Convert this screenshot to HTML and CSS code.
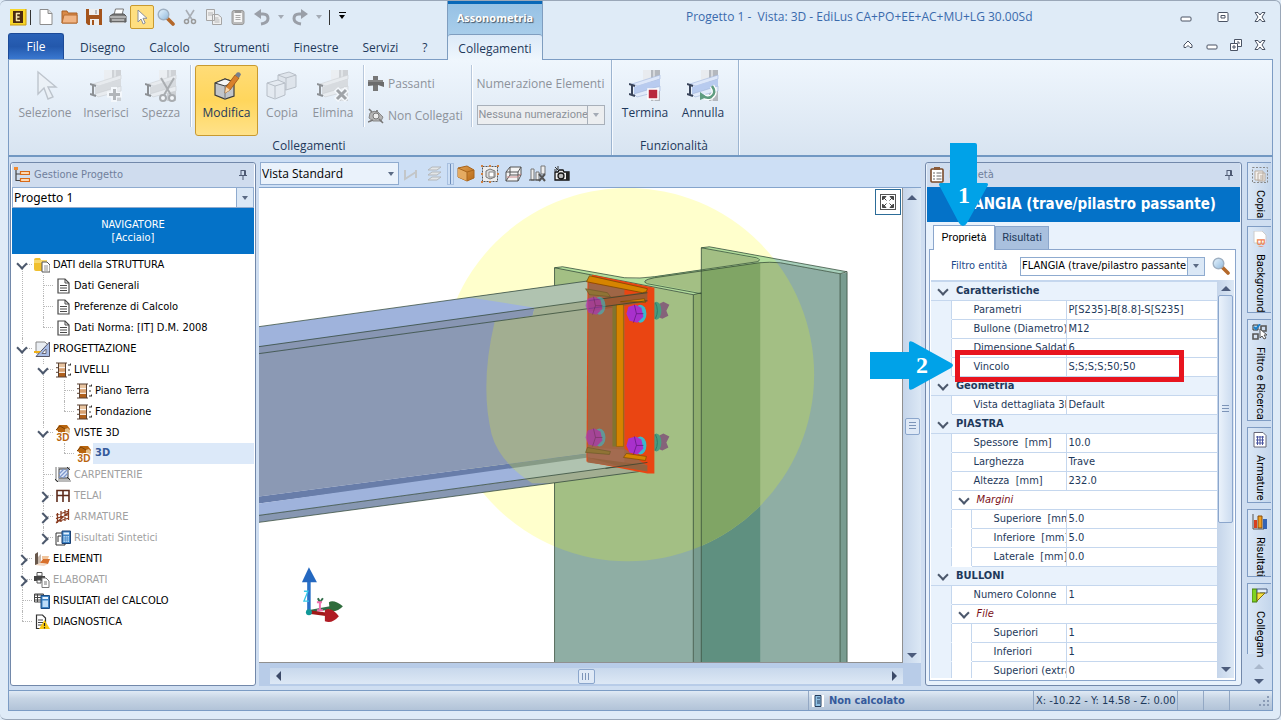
FILE: index.html
```
<!DOCTYPE html>
<html lang="it">
<head>
<meta charset="utf-8">
<title>Progetto 1 - Vista: 3D - EdiLus</title>
<link rel="stylesheet" href="styles.css">
</head>
<body>
<svg class="defs" aria-hidden="true">
  <defs>
    <linearGradient id="glass" x1="0" y1="0" x2="1" y2="1"><stop offset="0" stop-color="#eaf6ff"/><stop offset="1" stop-color="#8fb8dc"/></linearGradient>
    <linearGradient id="wood" x1="0" y1="0" x2="1" y2="1"><stop offset="0" stop-color="#e0a050"/><stop offset="1" stop-color="#b86a18"/></linearGradient>
  </defs>
  <symbol id="i-cursor" viewBox="0 0 16 16"><path d="M4 1v12l3-3 2.200 5 2-1-2.200-4.700h4z" fill="#fff" stroke="#8b8f98"/></symbol>
  <symbol id="i-lens" viewBox="0 0 18 18"><path d="M10 10l6 6" stroke="#b4682a" stroke-width="3.600" stroke-linecap="round"/><circle cx="6.500" cy="6.500" r="5.300" fill="url(#glass)" stroke="#9fb0c2" stroke-width="1.400"/></symbol>
  <symbol id="i-doc" viewBox="0 0 16 16"><path d="M3 1h7l4 4v10H3z" fill="#fff" stroke="#4a4a4a" stroke-width="1.200"/><path d="M10 1v4h4M5 7.500h7M5 10h7M5 12.500h7" fill="none" stroke="#4a4a4a"/></symbol>
  <symbol id="i-folder" viewBox="0 0 16 16"><path d="M0 3q0-2 2-2h4l1 2h6v11H2q-2 0-2-2z" fill="#f0c030"/><path d="M0 3h13v3H0z" fill="#f7d870"/><path d="M8 5h5l3 3v7H8z" fill="#fff" stroke="#555"/><path d="M10 9h4M10 11h4M10 13h4" stroke="#777" stroke-width=".8"/></symbol>
  <symbol id="i-design" viewBox="0 0 16 16"><path d="M2 1h9l3 3v8H2z" fill="#e9edf2" stroke="#888"/><path d="M15.500 1v14.500H2z" fill="#a9bde6" stroke="#556"/><path d="M12 8v4.500H8z" fill="#fff" stroke="#667"/><path d="M0 10h7l-2 2H0z" fill="#f0b018"/></symbol>
  <symbol id="i-level" viewBox="0 0 16 16"><path d="M3 1h8v14H3z" fill="#e8c4a0"/><path d="M3 6h8v4H3z" fill="#d8a070"/><path d="M3 10.500h8V15H3z" fill="#b0601c"/><path d="M1 1h11M1 5.700h2M1 10.300h2M1 15h11M3.500 1v14M10.500 1v14" stroke="#5a4030"/><path d="M4 5.700h6M4 10.300h6" stroke="#fff"/><path d="M13 3h3M13 8h3M13 13h3M15.500 1.500v3M15.500 11.500v3" stroke="#333" stroke-dasharray="2 1"/></symbol>
  <symbol id="i-house" viewBox="0 0 16 16"><path d="M1 5l3-5h8l3 4-2 3v2H3V6z" fill="#b8650f"/><path d="M10 4l3-1 2 3-1 4h-4z" fill="#e5bd88"/><path d="M1 5l4-4 5 3" stroke="#7d4408" fill="none"/><text x="8" y="15.500" text-anchor="middle" class="badge-text brown">3D</text></symbol>
  <symbol id="i-carp" viewBox="0 0 16 16"><path d="M4 2h9v9H4z" fill="#dce6f8" stroke="#444"/><path d="M4 7l5-5M4 11l9-9M8 11l5-5" stroke="#7d97cc" stroke-width="1.300"/><path d="M1 0v14h15M3 1h12M3 12h12" stroke="#666" fill="none" stroke-width=".9"/><path d="M0 12l3 3M12 0l3 3M12 10l3 3" stroke="#333"/></symbol>
  <symbol id="i-telai" viewBox="0 0 16 16"><path d="M2 14V2.500h12V14M8 2v12M2 7.500h12" fill="none" stroke="#5e2c1c" stroke-width="1.600"/></symbol>
  <symbol id="i-arm" viewBox="0 0 16 16"><path d="M2.500 14V4M6 13V2M10 12V1M13.500 11V0M1 6l13-4M1 9.500l13-4M1 13l13-4M1 14L14 3" stroke="#883a1e" stroke-width="1.300"/></symbol>
  <symbol id="i-calc" viewBox="0 0 16 16"><path d="M1 3h9v12H1zM3 12V6h3" fill="#fff" stroke="#333"/><path d="M7 1h8.500v12.500H7z" fill="#3d83c4" stroke="#1b3f70"/><path d="M8.500 2.500h5.500v2H8.500z" fill="#e6f2ff"/><path d="M8.500 6h5.500v6H8.500z" fill="#bddcf8"/><path d="M10.300 6v6M12.200 6v6M8.500 8H14M8.500 10H14" stroke="#3d83c4" stroke-width=".7"/></symbol>
  <symbol id="i-elem" viewBox="0 0 16 16"><path d="M1 3l3-2v13H1z" fill="#68584c"/><path d="M4 6l3-3v8l-3 3z" fill="#c8b8ac"/><path d="M6 12l3-4h7l-2 5z" fill="#d8702c"/><path d="M8 5h7l-1 3H8z" fill="#f0c49c"/><path d="M1 14l5-2 8 1-4 2z" fill="#f3d9c4"/></symbol>
  <symbol id="i-elab" viewBox="0 0 16 16"><path d="M3 .5h5V4H3z" fill="#fff" stroke="#555"/><path d="M0 4h11v5H0z" fill="#444"/><path d="M3 8h4v3H3z" fill="#fff" stroke="#555"/><path d="M8 6h4l3 3v6.500H8z" fill="#fff" stroke="#777"/><path d="M10 10h3M10 12h3" stroke="#777"/></symbol>
  <symbol id="i-res" viewBox="0 0 16 16"><path d="M.500 1h9v8h-9z" fill="#fff" stroke="#444"/><path d="M1 2h9M1 4.500h9M1 7h9M3.500 1v8" stroke="#444"/><path d="M7 2.500h8.500V15.500H7z" fill="#3d83c4" stroke="#1b4c84"/><path d="M8.500 4h5.500v2H8.500z" fill="#e6f2ff"/><path d="M8.500 7.500h5.500v6.500H8.500z" fill="#bddcf8"/></symbol>
  <symbol id="i-diag" viewBox="0 0 16 16"><path d="M2.500 1h6l3 3v10.500h-9z" fill="#fff" stroke="#333" stroke-width="1.200"/><path d="M4 6h5M4 8.500h5M4 11h4" stroke="#444"/><path d="M10.500 6L16 15H5z" fill="#f8c810"/><path d="M10.500 9v3M10.500 13v1.500" stroke="#222" stroke-width="1.200"/></symbol>
  <symbol id="i-pin" viewBox="0 0 10 12"><path d="M3 1.500h4.500v5M3 1v5.500M1 6.500h8M5 7v4M6.500 1.500v5" fill="none" stroke="#4f5b74"/></symbol>
  <symbol id="i-beam" viewBox="0 0 32 32"><path d="M14 0h9v24h-9z" fill="#e8ebef"/><path d="M22 0h9v31h-9z" fill="#b4b8be"/><path d="M24 0h2v31h-2z" fill="#d5d8dc"/><path d="M3 14L31 5v4L9 16z" fill="#dde7f9" stroke="#a3b7dd" stroke-width=".6"/><path d="M5 17l26-8v9L5 24z" fill="#b8cbef"/><path d="M5 24l26-8v5L8 27z" fill="#e2ebfa" stroke="#9fb3d8" stroke-width=".6"/><path d="M0 14l6 2M3 15v10M0 24l6 2" stroke="#39445a" stroke-width="2"/></symbol>
  <symbol id="i-cubes" viewBox="0 0 32 32"><path d="M12 5l11-3 7 3v12l-10 3-8-3z" fill="#d6dae0" stroke="#8f959e"/><path d="M12 5l8 3 10-3M20 8v12" fill="none" stroke="#8f959e"/><path d="M1 13l11-3 7 3v12L9 29l-8-3z" fill="#e1e5ea" stroke="#8f959e"/><path d="M1 13l8 3 10-3M9 16v12" fill="none" stroke="#8f959e"/></symbol>
  <symbol id="i-min" viewBox="0 0 12 12"><rect x="1" y="6" width="10" height="4" rx="1" fill="#fff" stroke="#4a5364"/></symbol>
  <symbol id="i-x" viewBox="0 0 12 12"><path d="M1 1.500h3l2 2.500 2-2.500h3L8 6l3 4.500H8L6 8l-2 2.500H1L4 6z" fill="#fff" stroke="#4a5364"/></symbol>
</svg>

<div class="app">
  <header class="top">
    <div class="top-left">
      <div class="quick">
        <svg class="s18" viewBox="0 0 18 18"><rect x="1" y="1" width="16" height="16" fill="#f7d62a"/><path d="M1 17h16V1" fill="none" stroke="#c99a10"/><rect x="4" y="3" width="10" height="12" fill="#4b2a10"/><path d="M7 5.500h4M7 9h3.500M7 12.500h4M7.500 5v8" stroke="#f7e6b0" stroke-width="1.500"/></svg>
        <span class="bar"></span>
        <button aria-label="Nuovo"><svg class="s18" viewBox="0 0 18 18"><path d="M3 1.500h8l4 4v11H3z" fill="#fff" stroke="#8c8c8c"/><path d="M11 1.500v4h4" fill="#ddd" stroke="#8c8c8c"/></svg></button>
        <button aria-label="Apri"><svg class="s18" viewBox="0 0 18 18"><path d="M1 15V3h5l1 2h9v10z" fill="#d98a48" stroke="#a85f24"/><path d="M1 15l2-8h13v8z" fill="#f0b484" stroke="#b86c30"/></svg></button>
        <button aria-label="Salva"><svg class="s18" viewBox="0 0 18 18"><path d="M1 1h16v16H3l-2-2z" fill="#a4541c"/><path d="M4 1h10v6H4zM5 11h9v6H5z" fill="#eee"/><path d="M7 12h2v5H7z" fill="#a4541c"/><path d="M10 2h2v4h-2z" fill="#bbb"/></svg></button>
        <button aria-label="Stampa"><svg class="s18" viewBox="0 0 18 18"><path d="M5 7l1.500-6h8L13 7z" fill="#fff" stroke="#777"/><path d="M1 8l3-2h11l2 2v6H1z" fill="#7d7d7d" stroke="#555"/><path d="M1 9h16M3 12h12M3 15h12" stroke="#e6e6e6" stroke-width="1.200"/></svg></button>
        <button class="on" aria-label="Seleziona"><svg class="s16"><use href="#i-cursor"/></svg></button>
        <button aria-label="Zoom"><svg class="s18"><use href="#i-lens"/></svg></button>
        <button aria-label="Taglia"><svg class="s16" viewBox="0 0 16 16"><path d="M4 1l6 9.500M12 1L6 10.500" stroke="#a9aeb5" stroke-width="1.600"/><circle cx="4.500" cy="12.500" r="2" fill="none" stroke="#999" stroke-width="1.500"/><circle cx="11.500" cy="12.500" r="2" fill="none" stroke="#999" stroke-width="1.500"/></svg></button>
        <button aria-label="Copia"><svg class="s16" viewBox="0 0 16 16"><path d="M.5.500h8v11h-8zM6.500 5.500H12l3.500 3v7h-9z" fill="#f0f0f0" stroke="#a5a5a5"/><path d="M2 4h5M2 6h4M8.500 9h4M8.500 11h5M8.500 13h5" stroke="#b5b5b5"/></svg></button>
        <button aria-label="Incolla"><svg class="s16" viewBox="0 0 16 16"><rect x="2" y="1.500" width="12" height="14" rx="2" fill="#bbb" stroke="#999"/><path d="M4 4h8v9H4z" fill="#f6f6f6"/><path d="M5 1h6v3H5z" fill="#999"/><path d="M5.500 6.500h5M5.500 8.500h5M5.500 10.500h5" stroke="#aaa"/></svg></button>
        <button aria-label="Annulla"><svg class="s18" viewBox="0 0 18 18"><path d="M5 6h5q5 0 5 4.500T8 16" fill="none" stroke="#9a9fa8" stroke-width="3"/><path d="M8 1v10L1 6z" fill="#9a9fa8"/></svg></button>
        <span class="caret pale"></span>
        <button aria-label="Ripeti"><svg class="s18" viewBox="0 0 18 18"><path d="M13 6H8q-5 0-5 4.500T10 16" fill="none" stroke="#9a9fa8" stroke-width="3"/><path d="M10 1v10l7-5z" fill="#9a9fa8"/></svg></button>
        <span class="caret pale"></span>
        <span class="bar"></span>
        <span class="caret custom"></span>
      </div>
      <nav class="tabs">
        <button class="file">File</button>
        <button>Disegno</button><button>Calcolo</button><button>Strumenti</button><button>Finestre</button><button>Servizi</button><button>?</button>
      </nav>
    </div>
    <div class="context">
      <div class="context-head">Assonometria</div>
      <button class="context-tab">Collegamenti</button>
    </div>
    <div class="top-right">
      <div class="title-row">
        <h1>Progetto 1 -&nbsp; Vista: 3D - EdiLus CA+PO+EE+AC+MU+LG 30.00Sd</h1>
        <button aria-label="Riduci a icona"><svg class="s12"><use href="#i-min"/></svg></button>
        <button aria-label="Ripristina"><svg class="s12" viewBox="0 0 12 12"><rect x="1" y="1.500" width="10" height="9" rx="1" fill="#fff" stroke="#4a5364"/><path d="M4 4.500h4v2.500H4z" fill="none" stroke="#4a5364"/></svg></button>
        <button aria-label="Chiudi"><svg class="s12"><use href="#i-x"/></svg></button>
      </div>
      <div class="mdi-row">
        <button aria-label="Comprimi barra"><svg class="s12" viewBox="0 0 12 12"><path d="M6 2L2 6v2.500h2L6 6.500l2 2h2V6z" fill="#fff" stroke="#4a5364"/></svg></button>
        <button aria-label="Riduci finestra"><svg class="s12"><use href="#i-min"/></svg></button>
        <button aria-label="Ripristina finestra"><svg class="s12" viewBox="0 0 12 12"><path d="M4.500.500h7v7h-7z" fill="#fff" stroke="#4a5364"/><path d="M.5 4.500h7v7h-7z" fill="#fff" stroke="#4a5364"/><path d="M3 7h2v2H3zM7 3h2v2" fill="none" stroke="#4a5364"/></svg></button>
        <button aria-label="Chiudi finestra"><svg class="s12"><use href="#i-x"/></svg></button>
      </div>
    </div>
  </header>

  <section class="ribbon">
    <div class="group">
      <div class="tools">
        <button class="tool w64" disabled><svg class="s32" viewBox="0 0 32 32"><path d="M9 2v22l6-6 4 11 5-2-5-10h8z" fill="#eef1f4" stroke="#9aa0a8" stroke-width="1.400"/></svg>Selezione</button>
        <button class="tool w58" disabled><svg class="s32 gray" viewBox="0 0 32 32"><use href="#i-beam"/><path d="M24 17v15M17 24.500h15" stroke="#fff" stroke-width="6"/><path d="M24.500 19v11M19 24.500h11" stroke="#888" stroke-width="3"/></svg>Inserisci</button>
        <button class="tool w52" disabled><svg class="s32 gray" viewBox="0 0 32 32"><use href="#i-beam"/><path d="M16 8l10 17M29 8L19 25" stroke="#777" stroke-width="2"/><circle cx="18" cy="28" r="3" fill="#fff" stroke="#777" stroke-width="2"/><circle cx="27" cy="28" r="3" fill="#fff" stroke="#777" stroke-width="2"/></svg>Spezza</button>
        <span class="sep"></span>
        <button class="tool w63 active"><svg class="s32" viewBox="0 0 32 32"><path d="M4 13l10-4 9 3v14l-9 3-10-4z" fill="#c2c5c9" stroke="#3c3c3c" stroke-width="1.200"/><path d="M4 13l10-4 9 3-9 4z" fill="#f5f5f5" stroke="#3c3c3c"/><path d="M14 16v13" stroke="#777"/><path d="M14 23l1-6L24 5l4 3-9 12z" fill="#d9812c" stroke="#9c5412" stroke-width=".8"/><path d="M24 5l2-2.500q3-1 4 2L28 8z" fill="#777f8c"/><path d="M14 23l1-6 4 3z" fill="#f7d7ac"/></svg>Modifica</button>
        <button class="tool w48" disabled><svg class="s32"><use href="#i-cubes"/></svg>Copia</button>
        <button class="tool w54" disabled><svg class="s32 gray" viewBox="0 0 32 32"><use href="#i-beam"/><path d="M19 19l11 11M30 19L19 30" stroke="#fff" stroke-width="6"/><path d="M20 20l9 9M29 20l-9 9" stroke="#666" stroke-width="3"/></svg>Elimina</button>
        <span class="sep"></span>
        <div class="stack">
          <button disabled><svg class="s16" viewBox="0 0 16 16"><path d="M5 0h5v15H5z" fill="#777"/><path d="M0 4h15v5H0z" fill="#888"/><path d="M0 6h16v5l-6-2-10 1z" fill="#6c6c6c"/></svg>Passanti</button>
          <button disabled><svg class="s16" viewBox="0 0 16 16"><path d="M2 5q4-3 8-1l5 5-2 4H5L1 10z" fill="#b4b4b4" stroke="#888"/><circle cx="8" cy="8" r="3" fill="#ececec" stroke="#777"/><path d="M0 14l5-2M11 11l4 4M1 1l3 3M9 2v2" stroke="#777" stroke-width="1.600"/></svg>Non Collegati</button>
        </div>
        <span class="sep"></span>
        <div class="stack numbering">
          <label for="numbering">Numerazione Elementi</label>
          <div class="combo off"><select id="numbering" disabled><option>Nessuna numerazione</option></select><span class="drop"><i class="caret pale"></i></span></div>
        </div>
      </div>
      <div class="group-name">Collegamenti</div>
    </div>
    <div class="group">
      <div class="tools">
        <button class="tool w58"><svg class="s32" viewBox="0 0 32 32"><use href="#i-beam"/><path d="M19 19h10v10H19z" fill="#b8293c" stroke="#fff" stroke-width="1.500"/></svg>Termina</button>
        <button class="tool w58"><svg class="s32" viewBox="0 0 32 32"><use href="#i-beam"/><path d="M25 16q5 7-1 11-4 2-8-1" fill="none" stroke="#fff" stroke-width="5"/><path d="M25 16q5 7-1 11-4 2-8-1" fill="none" stroke="#5f9c80" stroke-width="2.600"/><path d="M13 22v8l7-3z" fill="#5f9c80"/></svg>Annulla</button>
      </div>
      <div class="group-name">Funzionalità</div>
    </div>
  </section>

  <main class="work">
    <aside class="panel nav">
      <div class="panel-head"><svg class="s16" viewBox="0 0 16 16"><path d="M2 3v10.500h4M2 7h4" fill="none" stroke="#444" stroke-width="1.200"/><path d="M0 0h4v3H0z" fill="#f08a30"/><path d="M6.500 4.500h9v3h-9zM6.500 11.500h9v3h-9z" fill="#ffd8b0" stroke="#d86a18" stroke-width="1.200"/></svg><span>Gestione Progetto</span><svg class="pin"><use href="#i-pin"/></svg></div>
      <div class="combo project"><select aria-label="Progetto"><option>Progetto 1</option></select><span class="drop"><i class="caret"></i></span></div>
      <div class="navigator">NAVIGATORE<br>[Acciaio]</div>
      <ul class="tree">
        <li><div class="row"><button class="tog open" aria-label="Comprimi"></button><svg class="s16"><use href="#i-folder"/></svg><span>DATI della STRUTTURA</span></div>
          <ul>
            <li><div class="row"><i class="leaf"></i><svg class="s16"><use href="#i-doc"/></svg><span>Dati Generali</span></div></li>
            <li><div class="row"><i class="leaf"></i><svg class="s16"><use href="#i-doc"/></svg><span>Preferenze di Calcolo</span></div></li>
            <li><div class="row"><i class="leaf"></i><svg class="s16"><use href="#i-doc"/></svg><span>Dati Norma: [IT] D.M. 2008</span></div></li>
          </ul></li>
        <li><div class="row"><button class="tog open" aria-label="Comprimi"></button><svg class="s16"><use href="#i-design"/></svg><span>PROGETTAZIONE</span></div>
          <ul>
            <li><div class="row"><button class="tog open" aria-label="Comprimi"></button><svg class="s16"><use href="#i-level"/></svg><span>LIVELLI</span></div>
              <ul>
                <li><div class="row"><i class="leaf"></i><svg class="s16"><use href="#i-level"/></svg><span>Piano Terra</span></div></li>
                <li><div class="row"><i class="leaf"></i><svg class="s16"><use href="#i-level"/></svg><span>Fondazione</span></div></li>
              </ul></li>
            <li><div class="row"><button class="tog open" aria-label="Comprimi"></button><svg class="s16"><use href="#i-house"/></svg><span>VISTE 3D</span></div>
              <ul>
                <li><div class="row current"><i class="leaf"></i><svg class="s16"><use href="#i-house"/></svg><span>3D</span></div></li>
              </ul></li>
            <li><div class="row dim"><i class="leaf"></i><svg class="s16"><use href="#i-carp"/></svg><span>CARPENTERIE</span></div></li>
            <li><div class="row dim"><button class="tog" aria-label="Espandi"></button><svg class="s16"><use href="#i-telai"/></svg><span>TELAI</span></div></li>
            <li><div class="row dim"><button class="tog" aria-label="Espandi"></button><svg class="s16"><use href="#i-arm"/></svg><span>ARMATURE</span></div></li>
            <li><div class="row dim"><button class="tog" aria-label="Espandi"></button><svg class="s16"><use href="#i-calc"/></svg><span>Risultati Sintetici</span></div></li>
          </ul></li>
        <li><div class="row"><button class="tog" aria-label="Espandi"></button><svg class="s16"><use href="#i-elem"/></svg><span>ELEMENTI</span></div></li>
        <li><div class="row dim"><button class="tog" aria-label="Espandi"></button><svg class="s16"><use href="#i-elab"/></svg><span>ELABORATI</span></div></li>
        <li><div class="row"><i class="leaf"></i><svg class="s16"><use href="#i-res"/></svg><span>RISULTATI del CALCOLO</span></div></li>
        <li><div class="row"><i class="leaf"></i><svg class="s16"><use href="#i-diag"/></svg><span>DIAGNOSTICA</span></div></li>
      </ul>
    </aside>

    <section class="view">
      <div class="view-bar">
        <div class="combo flat"><select aria-label="Vista"><option>Vista Standard</option></select><span class="drop"><i class="caret"></i></span></div>
        <button disabled aria-label="Linea"><svg class="s16" viewBox="0 0 16 16"><path d="M2 4v9l11-7M13 4v8" fill="none" stroke="#c3c6c8" stroke-width="2"/></svg></button>
        <button disabled aria-label="Livelli"><svg class="s16" viewBox="0 0 16 16"><path d="M1 4l4-3h9l-4 3zM1 9l4-3h9l-4 3zM1 14l4-3h9l-4 3z" fill="#e3e6e8" stroke="#b4b7ba"/></svg></button>
        <span class="grip"></span>
        <button aria-label="Solido"><svg class="s18" viewBox="0 0 18 18"><path d="M1 3l9-2 7 4v8l-7 3-9-4z" fill="url(#wood)" stroke="#a8641c"/><path d="M1 3l9 4v9l-9-4z" fill="#e5ab62"/><path d="M1 3l9 4 7-2M10 7v9" fill="none" stroke="#a8641c"/></svg></button>
        <button aria-label="Selezione"><svg class="s18" viewBox="0 0 18 18"><rect x="1.500" y="1.500" width="15" height="15" fill="#eee" stroke="#555" stroke-dasharray="2 1"/><path d="M5 6l4-2 5 2v6l-5 2-4-2z" fill="#ddd" stroke="#777"/><path d="M8 7h5v5H8z" fill="#fff" stroke="#888"/><path d="M0 8h2v2H0zM8 0h2v2H8zM16 8h2v2h-2zM8 16h2v2H8zM0 0h2v2H0zM16 0h2v2h-2zM0 16h2v2H0z" fill="#d08040"/></svg></button>
        <button aria-label="Filo di ferro"><svg class="s18" viewBox="0 0 18 18"><path d="M1 7l4-5h11v8l-3 6H1zM1 7h12v9M13 7l3-5M5 2v8l-4 6M5 10h11" fill="#f4f4f4" stroke="#555"/><path d="M2 12h10l4-3" stroke="#c88" fill="none"/></svg></button>
        <button aria-label="Rimuovi"><svg class="s18" viewBox="0 0 18 18"><path d="M2 4h3v11H2zM7 7h3v8H7zM12 1h4v8h-4z" fill="#eee" stroke="#777"/><path d="M0 15h10" stroke="#444"/><path d="M10 9l6 7M16 9l-6 7" stroke="#555" stroke-width="2"/></svg></button>
        <button aria-label="Fotografia"><svg class="s16" viewBox="0 0 16 16"><path d="M1 6h3l1-2h4l1 2h5v8H1z" fill="#eee" stroke="#111" stroke-width="1.300"/><circle cx="7" cy="10" r="3" fill="#bbb" stroke="#111" stroke-width="1.300"/><path d="M12 6h3v8h-3z" fill="#222"/><path d="M1 1l3 3M4 0v3M0 4h3" stroke="#333"/></svg></button>
      </div>
      <div class="stage">
        <div class="canvas">
          <svg class="scene" viewBox="259 188 644 475" preserveAspectRatio="xMidYMid slice" role="img" aria-label="Modello 3D del nodo trave-pilastro">
            <defs>
              <clipPath id="ball"><circle cx="628" cy="375" r="187"/></clipPath>
              <clipPath id="ballbeam"><path d="M466 297L535 308 533 316 495 322Q480 385 492 435Q500 463 533 484H660V270H480Z"/></clipPath>
              <g id="column-shape">
                <path class="c-face" d="M702 248L841 274V663H702z"/>
                <path class="c-edge" d="M841 274L848 273V663H841z"/>
                <path class="c-top" d="M702 248L710 247 848 272 841 274 781 263Q770 262 760 263L702 271 650 279 644 281 702 292 702 296 555 268 563 267 625 278Q640 280 653 277L757 262Q762 261 757 259z"/>
                <path class="c-web" d="M702 271L761 263V663H702z"/>
                <path class="c-face" d="M555 268L694 295V663H555z"/>
                <path class="c-face" d="M653 278L702 271V293L648 283Q642 281 653 278z"/>
                <path class="c-edge" d="M694 295L702 293V663H694z"/>
              </g>
              <g id="bolt"><ellipse cx="5" cy="0" rx="6" ry="9" fill="#3ab8cc"/><path d="M-7-7L0-9 6-6 8 3 2 9-6 7-9 0z" fill="#a830cc"/><path d="M-1-9L1 0-2 9M1 0h7" stroke="#5c1678" fill="none" stroke-width=".7"/></g>
              <g id="nut"><path d="M4-7L8-9 14-6 11 0 13 5 7 8 2 6z" fill="#85637a"/><ellipse cx="1" cy="0" rx="5" ry="9" fill="#4a9c80"/><path d="M0-8q4 8 0 16" stroke="#2f7c68" fill="none"/></g>
            </defs>
            <rect x="0" y="0" width="1281" height="720" fill="#fff"/>
            <circle cx="628" cy="375" r="187" fill="#ffffcc"/>
            <use href="#column-shape" class="cool"/>
            <g clip-path="url(#ball)"><use href="#column-shape" class="warm"/></g>
            <path class="ink" d="M555 663V268L563 267 625 278Q641 279 655 277L758 262Q763 260 757 258L702 248 710 247 848 272 841 274 781 263Q770 262 760 263L655 278Q640 281 648 284L702 294M555 268L694 295 702 293V663M694 295V663M702 293V248M841 274V663M848 272V663"/>
            <g>
              <path d="M259 327L590 281 648 292 648 301 259 355z" fill="#9fb3dc"/>
              <path d="M259 347L596 300V308L259 354z" fill="#8896b3"/>
              <path d="M259 354L596 308V453L259 497z" fill="#8b99b4"/>
              <path d="M259 497L596 453V460L259 504z" fill="#687da9"/>
              <path d="M259 504L596 457 650 463 259 516z" fill="#9fb3dc"/>
              <path d="M259 516L648 463V471L259 523z" fill="#8797b2"/>
            </g>
            <g clip-path="url(#ballbeam)">
              <path d="M259 327L590 281 648 292 648 301 259 355z" fill="#b0c3b0"/>
              <path d="M259 347L596 300V453L259 497z" fill="#a2ae91"/>
              <path d="M259 497L596 453V460L259 504z" fill="#869a86"/>
              <path d="M259 504L596 457 650 463 259 516z" fill="#b0c3b0"/>
              <path d="M259 516L648 463V471L259 523z" fill="#a2ae91"/>
            </g>
            <path class="ink" d="M259 327L590 281M259 347L596 300M259 354L596 308M259 516L648 463M259 523L648 471"/>
            <use href="#nut" x="656" y="311"/><use href="#nut" x="656" y="443"/>
            <path d="M588 283L593 275 655 288V474L648 474 587 462z" fill="#ea4512"/>
            <path d="M589 283L625 289V449L644 464 648 466 646 471 588 463z" fill="#9f6646"/>
            <path d="M589 300L648 292V302L589 312z" fill="#9c5a32"/>
            <path d="M588 448L625 450V465L588 458z" fill="#a36b50"/>
            <path d="M613 306h4v141h-4z" fill="#81742f"/>
            <path d="M617 305h7v142h-7z" fill="#d68400" stroke="#8c6000" stroke-width=".6"/>
            <path d="M587 282L590 276 648 289 647 292 643 293z" fill="#d68400" stroke="#704400" stroke-width=".7"/>
            <path d="M586 289L608 293 611 297 590 295zM586 453L588 448 611 452 610 455z" fill="#907335" stroke="#5e5020" stroke-width=".5"/>
            <path d="M621 302L645 299 646 303 636 302zM624 458L627 454 647 457 646 461z" fill="#d68400" stroke="#704400" stroke-width=".6"/>
            <path d="M588 458L648 466V472L625 468z" fill="#94623f"/>
            <path class="ink" d="M589 301L648 293M589 309L648 301M606 469L648 463"/>
            <g opacity=".6"><use href="#bolt" x="595" y="306"/><use href="#bolt" x="595" y="438"/></g>
            <use href="#bolt" x="636" y="314"/><use href="#bolt" x="636" y="446"/>
            <g>
              <path d="M309 612V582" stroke="#2870c8" stroke-width="3.500"/><path d="M309 568L317 583H302z" fill="#2468c0"/>
              <path d="M304 592h4l-4 10h5" fill="none" stroke="#38c8e8" stroke-width="1.300"/>
              <path d="M311 612L333 608" stroke="#2f6c48" stroke-width="3"/><path d="M329 603Q334 600 343 607Q338 613 330 612z" fill="#2f6c3c"/>
              <path d="M311 613L326 615" stroke="#a01818" stroke-width="3.500"/><path d="M325 611Q331 607 339 617Q332 625 325 622z" fill="#b01c24"/>
              <path d="M318 599l2 4 3-4" stroke="#2f6c48" stroke-width="2" fill="none"/><path d="M317 603h5M320 603v8M317 611h6" stroke="#f070b0" stroke-width="2" fill="none"/>
              <circle cx="309" cy="613" r="3" fill="#109898"/>
            </g>
          </svg>
          <button class="fit" aria-label="Adatta alla finestra"><svg class="s18" viewBox="0 0 18 18"><rect x="1.500" y="1.500" width="15" height="15" fill="#fff" stroke="#555"/><path d="M3.500 7V3.500H7zM11 3.500h3.500V7zM3.500 11v3.500H7zM14.500 11v3.500H11zM4 4l3.500 3.500M14 4l-3.500 3.500M4 14l3.500-3.500M14 14l-3.500-3.500" fill="#444" stroke="#444"/></svg></button>
        </div>
        <div class="vscroll"><i class="tri up"></i><i class="thumb v"></i><i class="tri down"></i></div>
      </div>
      <div class="hscroll"><div class="track"><i class="tri left"></i><i class="thumb h"></i><i class="tri right"></i></div></div>
    </section>

    <aside class="panel props">
      <div class="panel-head"><svg class="s16" viewBox="0 0 16 16"><rect x="2" y="2" width="12" height="13" rx="1" fill="#fff" stroke="#7a4a28" stroke-width="1.600"/><path d="M5 0h6v3H5z" fill="#8a5a38"/><path d="M4 6h2M4 9h2M4 12h2M7.500 6h5M7.500 9h5M7.500 12h5" stroke="#666"/></svg><span>Proprietà</span><svg class="pin"><use href="#i-pin"/></svg></div>
      <h2>FLANGIA (trave/pilastro passante)</h2>
      <div class="sheet">
        <div class="sheet-tabs"><button class="sel">Proprietà</button><button>Risultati</button></div>
        <div class="pane">
          <div class="filter"><label for="entity">Filtro entità</label><div class="combo entity"><select id="entity"><option>FLANGIA (trave/pilastro passante)</option></select><span class="drop"><i class="caret"></i></span></div><button aria-label="Cerca"><svg class="s18"><use href="#i-lens"/></svg></button></div>
          <div class="grid">
            <div class="grid-body">
            <table>
              <colgroup><col class="k1"><col class="k1"><col class="k3"><col></colgroup>
              <tbody>
                <tr class="sec"><th colspan="4"><i class="chev"></i>Caratteristiche</th></tr>
                <tr><td class="g"></td><th colspan="2">Parametri</th><td>P[S235]-B[8.8]-S[S235]</td></tr>
                <tr><td class="g"></td><th colspan="2">Bullone (Diametro)</th><td>M12</td></tr>
                <tr><td class="g"></td><th colspan="2">Dimensione Saldatura</th><td>6</td></tr>
                <tr><td class="g"></td><th colspan="2">Vincolo</th><td>S;S;S;S;50;50</td></tr>
                <tr class="sec"><th colspan="4"><i class="chev"></i>Geometria</th></tr>
                <tr><td class="g"></td><th colspan="2">Vista dettagliata 3D</th><td>Default</td></tr>
                <tr class="sec"><th colspan="4"><i class="chev"></i>PIASTRA</th></tr>
                <tr><td class="g"></td><th colspan="2">Spessore&nbsp; [mm]</th><td>10.0</td></tr>
                <tr><td class="g"></td><th colspan="2">Larghezza</th><td>Trave</td></tr>
                <tr><td class="g"></td><th colspan="2">Altezza&nbsp; [mm]</th><td>232.0</td></tr>
                <tr class="sub"><td class="g"></td><th colspan="3"><i class="chev"></i>Margini</th></tr>
                <tr><td class="g"></td><td class="w"></td><th>Superiore&nbsp; [mm]</th><td>5.0</td></tr>
                <tr><td class="g"></td><td class="w"></td><th>Inferiore&nbsp; [mm]</th><td>5.0</td></tr>
                <tr><td class="g"></td><td class="w"></td><th>Laterale&nbsp; [mm]</th><td>0.0</td></tr>
                <tr class="sec"><th colspan="4"><i class="chev"></i>BULLONI</th></tr>
                <tr><td class="g"></td><th colspan="2">Numero Colonne</th><td>1</td></tr>
                <tr class="sub"><td class="g"></td><th colspan="3"><i class="chev"></i>File</th></tr>
                <tr><td class="g"></td><td class="w"></td><th>Superiori</th><td>1</td></tr>
                <tr><td class="g"></td><td class="w"></td><th>Inferiori</th><td>1</td></tr>
                <tr><td class="g"></td><td class="w"></td><th>Superiori (extra)</th><td>0</td></tr>
              </tbody>
            </table>
            </div>
            <div class="grid-scroll"><i class="tri up"></i><i class="thumb long"></i><i class="tri down"></i></div>
          </div>
        </div>
      </div>
      <div class="mark"></div>
      <svg class="arrow one" viewBox="0 0 49 84"><path d="M11 0h25q2 0 2 2v38h9q3 0 1.500 3L28 80q-4 6-8 0L.500 43Q-1 40 2 40h9z" fill="#00a2e8"/><text x="25" y="60" text-anchor="middle">1</text></svg>
      <svg class="arrow two" viewBox="0 0 84 49"><path d="M0 11h39V2q0-3 4-1l38 21q4 2 0 5L43 48q-4 2-4-1v-9H0z" fill="#00a2e8"/><text x="52" y="32" text-anchor="middle">2</text></svg>
    </aside>

    <nav class="side">
      <button class="h57"><svg class="s16" viewBox="0 0 16 16"><rect x=".5" y=".5" width="15" height="15" fill="none" stroke="#888" stroke-dasharray="2 1.500"/><path d="M3 4h8v9H3zM6 6h7v8H6z" fill="#f4f0ec" stroke="#b8aca0"/><path d="M8 9h3M8 11h3" stroke="#b8aca0"/></svg>Copia</button>
      <button class="h86"><svg class="s16" viewBox="0 0 16 16"><path d="M2 0h8l4 4v8H2z" fill="#fff" stroke="#ccc"/><text x="8" y="15" text-anchor="middle" class="badge-text coral">BG</text></svg>Background</button>
      <button class="h101"><svg class="s16" viewBox="0 0 16 16"><path d="M1 1h5v5H1z" fill="#bfe2fa" stroke="#333"/><path d="M2 3l2 2 4-5" fill="none" stroke="#1d80c8" stroke-width="2"/><path d="M1 10h5v5H1zM9 2h5v5H9z" fill="none" stroke="#555" stroke-width="1.600"/><path d="M8 5v9l2-2 2 3 2-1-2-3h3z" fill="#fff" stroke="#555"/></svg>Filtro e Ricerca</button>
      <button class="h75"><svg class="s16" viewBox="0 0 16 16"><path d="M2 .5h9l3 3V15H2z" fill="#fff" stroke="#667"/><path d="M4 5h8M4 8h8M4 11h8M5.500 4v9M8 4v9M10.500 4v9" stroke="#4a55a0"/></svg>Armature</button>
      <button class="h68"><svg class="s16" viewBox="0 0 16 16"><path d="M2 6h3v8H2z" fill="#d84020"/><path d="M6 2h4v12H6z" fill="#f0a020" stroke="#8a4c08"/><path d="M11 5h4v10h-4z" fill="#3464b4"/><path d="M1 0v15h11" stroke="#555" fill="none"/></svg>Risultati</button>
      <button class="h70"><svg class="s16" viewBox="0 0 16 16"><path d="M0 1h5v13H0z" fill="#7ed321" stroke="#467a10"/><path d="M5 1h10v4H8L5 12z" fill="#e4eefa" stroke="#445a80"/><path d="M5 5h8l-8 8z" fill="#f6e040" stroke="#807010"/></svg>Collegam</button>
      <i class="tri up faint"></i><i class="tri down"></i>
    </nav>
  </main>

  <footer class="status">
    <div class="state"><svg class="s12" viewBox="0 0 12 12"><path d="M0 0h12v12H0z" fill="#fff"/><path d="M3 .5h6v11H3z" fill="#8fc0e4" stroke="#223a5a"/><path d="M5 3h3M5 6h3M5 8h3" stroke="#223a5a"/></svg>Non calcolato</div>
    <div class="coords">X: -10.22 - Y: 14.58 - Z: 0.00</div>
    <span class="cell"></span><span class="cell"></span>
    <div class="size"><svg class="s12" viewBox="0 0 12 12"><path d="M9 0h2v2H9zM9 4h2v2H9zM5 4h2v2H5zM9 8h2v2H9zM5 8h2v2H5zM1 8h2v2H1z" fill="#8a9bb5"/></svg></div>
  </footer>
</div>
</body>
</html>
```
FILE: styles.css
```
* { box-sizing: border-box; }
body { margin: 0; background: #dfebf7; color: #1e395b; font: 11px/14px "DejaVu Sans Condensed", "Noto Sans", sans-serif; }
button { border: 0; padding: 0; margin: 0; background: none; font: inherit; color: inherit; }
select { appearance: none; border: 0; padding: 0; margin: 0; background: transparent; font: inherit; color: #000; flex: 1; min-width: 0; opacity: 1; }
ul { list-style: none; margin: 0; padding: 0; }
svg { display: block; flex: none; }
.defs { position: absolute; width: 0; height: 0; }
.s12 { width: 12px; height: 12px; }
.s16 { width: 16px; height: 16px; }
.s18 { width: 18px; height: 18px; }
.s32 { width: 32px; height: 32px; }
.badge-text { font: bold 10px "Liberation Sans", sans-serif; }
.brown { fill: #b8650f; stroke: #fff; stroke-width: 2px; paint-order: stroke; }
.coral { fill: #ee8858; }

.app { display: flex; flex-direction: column; height: 100vh; min-height: 600px; padding: 0 7px 8px 8px; border: 1px solid #9aa7b8; border-width: 1px 1px 1px 0; border-radius: 6px; overflow: hidden; }

/* title bar and tabs */
.top { display: flex; flex: none; height: 58px; font: 12px/16px "Open Sans", "Noto Sans", sans-serif; }
.top-left { flex: none; width: 439px; display: flex; flex-direction: column; }
.quick { display: flex; align-items: center; height: 32px; padding-left: 1px; }
.quick button { width: 24px; height: 24px; display: flex; align-items: center; justify-content: center; }
.quick button.on { border: 1px solid #c89a30; border-radius: 2px; background: #ffdf80; }
.bar { width: 1px; height: 15px; margin: 0 3px; background: #333; }
.caret { display: block; width: 0; height: 0; border: 3px solid transparent; border-top: 4px solid #5b6b84; border-bottom: 0; }
.caret.pale { border-top-color: #a4abb5; }
.quick .caret { margin: 0 4px; }
.quick .custom { border-top-color: #000; position: relative; margin-left: 6px; }
.quick .custom::before { content: ""; position: absolute; left: -3px; top: -7px; width: 7px; height: 1px; background: #000; }
.tabs { display: flex; height: 26px; }
.tabs button { flex: none; padding: 3px 12px 0; }
.tabs .file { width: 56px; padding: 0; margin-right: 4px; color: #fff; background: linear-gradient(#2a62b8, #2358ac 50%, #3a78d0); border: 1px solid #1c4a98; border-bottom: 0; border-radius: 3px 3px 0 0; }
.context { flex: none; width: 96px; display: flex; flex-direction: column; border: 1px solid #7f9dbf; border-width: 0 1px; background: linear-gradient(#94c0e4, #b8d7ef); }
.context-head { flex: 1; padding-top: 6px; border-top: 4px solid #0868b8; margin-top: -1px; text-align: center; font-weight: bold; font-size: 11px; color: #fff; text-shadow: 1px 1px 1px #456; }
.context-tab { height: 26px; margin-bottom: -1px; z-index: 1; padding-top: 2px; background: linear-gradient(#dceaf8, #eff6fd); border-top: 1px solid #7f9dbf; border-radius: 3px 3px 0 0; }
.top-right { flex: 1; min-width: 0; }
.title-row, .mdi-row { display: flex; align-items: center; height: 32px; padding-right: 7px; gap: 25px; }
.title-row h1 { flex: 1; margin: 0 0 0 143px; font: inherit; color: #3a6aac; white-space: nowrap; }
.mdi-row { height: 24px; justify-content: flex-end; gap: 12px; }
.title-row button, .mdi-row button { width: 12px; height: 12px; }

/* ribbon */
.ribbon { display: flex; flex: none; height: 98px; border: 1px solid #7c9cc4; border-bottom: 2px solid #7298c2; background: linear-gradient(#eff6fd, #d8e4f1); font: 12px/16px "Open Sans", "Noto Sans", sans-serif; }
.group { display: flex; flex-direction: column; padding: 5px 6px 0 4px; border-right: 1px solid #9cb4d0; box-shadow: 1px 0 #f6faff; }
.tools { display: flex; height: 73px; }
.tool { display: flex; flex-direction: column; align-items: center; height: 71px; padding-top: 4px; gap: 3px; border: 1px solid transparent; border-radius: 3px; }
.tool:disabled, .stack button:disabled { color: #8d929a; }
.tool:disabled svg { opacity: .55; }
.gray { filter: grayscale(1); }
.tool.active { border-color: #c89a30; background: linear-gradient(#ffdc78, #ffd65c 50%, #ffe28a); }
.w48 { width: 48px; } .w52 { width: 52px; } .w54 { width: 54px; } .w58 { width: 58px; } .w63 { width: 63px; } .w64 { width: 64px; }
.sep { width: 1px; height: 62px; margin: 0 4px 0 3px; background: #b8c8dc; box-shadow: 1px 0 #fff; }
.stack { display: flex; flex-direction: column; gap: 16px; padding-top: 11px; width: 100px; white-space: nowrap; }
.stack button { display: flex; align-items: center; gap: 4px; height: 16px; }
.numbering { width: 129px; color: #8d929a; align-items: center; gap: 13px; }
.group-name { text-align: center; }
.combo { display: flex; align-items: stretch; height: 20px; border: 1px solid #8fabcf; background: #fff; }
.combo .drop { display: flex; flex: none; width: 17px; align-items: center; justify-content: center; border-left: 1px solid #8fabcf; background: #dbe8f6; }
.combo.off { width: 128px; border-color: #a8b0ba; background: #eceef0; }
.combo.off select { color: #8d929a; font: 11px/16px Roboto, sans-serif; padding-left: 1px; }
.combo.off .drop { border-color: #a8b0ba; background: #eceef0; }

/* working area */
.work { flex: 1; min-height: 0; display: flex; padding: 3px 1px 4px 1px; border: 1px solid #7c9cc4; border-width: 0 1px; background: #cfdef1; }
.panel { position: relative; display: flex; flex-direction: column; flex: none; border: 1px solid #7288aa; border-radius: 3px; padding: 0 1px; margin-top: 2px; background: #e9f2fc; }
.panel-head { display: flex; align-items: center; gap: 4px; flex: none; height: 24px; padding: 0 6px 0 2px; color: #6f7f9c; background: #cfdcee; }
.panel-head span { flex: 1; }
.pin { width: 10px; height: 12px; }
.nav { width: 246px; background: #fff; }
.project select { padding-left: 1px; font: 12px/16px "Noto Sans", sans-serif; }
.combo.project { flex: none; height: 21px; }
.navigator { flex: none; height: 46px; padding-top: 10px; color: #fff; background: #0472c8; text-align: center; line-height: 13px; }
.tree { color: #000; flex: 1; min-height: 0; overflow: hidden; }
.tree ul { padding-left: 21px; }
.tree li { position: relative; }
.tree li::before { content: ""; position: absolute; left: 10px; top: 0; bottom: 0; border-left: 1px dotted #b8b8b8; }
.tree li:last-child::before { bottom: auto; height: 10px; }
.tree > li:first-child::before { top: 10px; }
.row { position: relative; display: flex; align-items: center; height: 21px; }
.row::before { content: ""; position: absolute; left: 10px; width: 10px; top: 10px; border-top: 1px dotted #b8b8b8; }
.row svg { margin-right: 1px; }
.row span { padding: 0 2px; white-space: nowrap; }
.leaf { width: 22px; flex: none; }
.tog { position: relative; width: 9px; height: 9px; margin: 0 8px 0 5px; background: #fff; }
.tog::before, .chev::before { content: ""; position: absolute; left: 1px; top: 2px; width: 6px; height: 6px; border: solid #4c586c; border-width: 0 2px 2px 0; transform: rotate(-45deg); }
.tog.open::before, .chev::before { transform: rotate(45deg); top: 0; }
.row.current span { flex: 1; height: 21px; line-height: 20px; font-weight: bold; color: #355a9b; background: #dce9f9; }
.row.dim { color: #a0a0a0; }

.view { flex: 1; min-width: 0; display: flex; flex-direction: column; margin: 0 4px 0 3px; background: #b8cce8; }
.view-bar { display: flex; align-items: center; flex: none; height: 28px; padding: 0 1px; border-bottom: 1px solid #84a4cc; background: #cddff5; }
.view-bar button { display: flex; align-items: center; justify-content: center; width: 24px; height: 18px; }
.flat { width: 139px; }
.flat select { padding-left: 1px; font: 12px/16px "Open Sans", sans-serif; }
.combo.flat { height: 23px; background: #eaf2fb; }
.combo.flat .drop { border: 0; background: none; width: 14px; }
.grip { width: 7px; height: 22px; border: 1px solid #a8c0e0; background: linear-gradient(90deg, transparent 2px, #6a8ab8 2px 3px, transparent 3px); }
.stage { flex: 1; min-height: 0; display: flex; }
.canvas { position: relative; flex: 1; min-width: 0; background: #fff; border-right: 1px solid #909090; border-bottom: 1px solid #909090; }
.scene { width: 100%; height: 100%; }
.fit { position: absolute; right: 1px; top: 1px; width: 26px; height: 26px; padding: 3px; border: 1px solid #2c6c98; background: #fff; }
.cool { --face: #8faea4; --edge: #799c90; --web: #5f9080; --lid: #a8d0bc; }
.warm { --face: #a3bf84; --edge: #8fae6e; --web: #80a565; --lid: #b2dd9c; }
.c-face { fill: var(--face); } .c-edge { fill: var(--edge); } .c-web { fill: var(--web); } .c-top { fill: var(--lid); }
.ink { fill: none; stroke: #28402c; stroke-width: .7; }
.vscroll, .grid-scroll { width: 18px; flex: none; display: flex; flex-direction: column; align-items: center; justify-content: space-between; padding: 7px 0 5px; background: linear-gradient(90deg, #c5d5ea, #dce8f5); }
.hscroll { flex: none; height: 23px; padding: 5px 18px 2px 11px; }
.track { display: flex; height: 16px; align-items: center; justify-content: space-between; padding: 0 6px; background: linear-gradient(#c8d8ec, #dde8f5); }
.tri { width: 0; height: 0; border: 5px solid transparent; }
.tri.up { border-top: 0; border-bottom-color: #4c5c7c; }
.tri.down { border-bottom: 0; border-top-color: #4c5c7c; }
.tri.left { border-left: 0; border-right-color: #3c4a68; }
.tri.right { border-right: 0; border-left-color: #3c4a68; }
.tri.faint { border-bottom-color: #aab8cc; }
.thumb { display: block; border: 1px solid #8ba6cc; border-radius: 2px; }
.thumb.v, .thumb.h { width: 15px; height: 17px; background: repeating-linear-gradient(#7c94b8 0 1px, transparent 1px 3px) center / 7px 9px no-repeat #dfe9f6; }
.thumb.h { width: 17px; height: 15px; background: repeating-linear-gradient(90deg, #7c94b8 0 1px, transparent 1px 3px) center / 9px 7px no-repeat #dfe9f6; }

/* properties */
.props { width: 317px; }
.props h2 { flex: none; height: 35px; margin: 0; padding-right: 24px; text-align: right; font: bold 15px/35px "DejaVu Sans Condensed", "Noto Sans", sans-serif; color: #fff; background: #0472c8; white-space: nowrap; }
.sheet { flex: 1; min-height: 0; display: flex; flex-direction: column; padding: 3px 4px 4px 2px; }
.sheet-tabs { display: flex; align-items: flex-end; flex: none; height: 24px; padding-left: 4px; font: 11px/14px Roboto, sans-serif; }
.sheet-tabs button { width: 54px; height: 23px; border: 1px solid #8ba6cc; border-bottom: 0; background: #a9c0de; }
.sheet-tabs .sel { width: 62px; height: 25px; margin-bottom: -1px; z-index: 1; background: #fff; color: #000; }
.pane { flex: 1; min-height: 0; display: flex; flex-direction: column; padding: 0 1px 2px; border: 1px solid #8ba6cc; background: #fff; }
.filter { display: flex; align-items: center; flex: none; height: 30px; padding: 2px 3px 0 20px; }
.filter label { width: 69px; color: #1e4a8b; white-space: nowrap; }
.combo.entity { width: 185px; height: 19px; margin-right: 7px; }
.entity select { padding-left: 1px; }
.grid { flex: 1; min-height: 0; display: flex; }
.grid-body { flex: 1; min-width: 0; overflow: hidden; border-top: 1px solid #c5d7ee; }
table { width: 100%; border-collapse: collapse; table-layout: fixed; }
.k1 { width: 20px; } .k3 { width: 95px; }
td, th { height: 19px; padding: 0 0 0 2px; border: 1px solid #c5d7ee; border-left: 0; text-align: left; font-weight: normal; line-height: 16px; background: #fff; white-space: nowrap; overflow: hidden; }
tr > :last-child { border-right: 0; }
tr:not(.sub):not(.sec) th { padding-left: 22px; }
td.g { background: #e9f2fc; border-top-color: #e9f2fc; border-bottom-color: #e9f2fc; }
td.w { border-top-color: #fff; border-bottom-color: #fff; }
.sec th { font-weight: bold; background: #e9f2fc; }
.sub th { color: #7a1018; font-style: italic; }
.chev { position: relative; display: inline-block; width: 9px; height: 8px; margin: 0 9px 0 5px; }
.grid-scroll { width: 17px; padding: 6px 0 6px; justify-content: flex-start; }
.grid-scroll .down { margin-top: auto; }
.thumb.long { flex: 0 1 228px; width: 15px; margin-top: 4px; background: repeating-linear-gradient(#7c94b8 0 1px, transparent 1px 3px) center / 7px 9px no-repeat, linear-gradient(90deg, #eaf2fb, #ccdcf0); }
.grid-scroll .tri { flex: none; }
.mark { position: absolute; left: 29px; top: 187px; width: 229px; height: 32px; border: 5px solid #e8151f; }
.arrow { position: absolute; z-index: 2; }
.arrow text { fill: #fff; font: bold 24px "Liberation Serif", serif; }
.one { left: 13px; top: -20px; width: 49px; height: 84px; }
.two { left: -56px; top: 178px; width: 84px; height: 49px; }

.side { display: flex; flex-direction: column; align-items: center; gap: 6px; flex: none; width: 24px; margin: 2px 0 0 5px; color: #000; }
.side button { display: flex; align-items: center; gap: 7px; width: 24px; flex: none; padding-top: 4px; writing-mode: vertical-rl; border: 1px solid #7f9cc4; border-right: 0; background: linear-gradient(90deg, #dce8f6, #c4d6ec); font: 11px/14px Roboto, sans-serif; white-space: nowrap; }
.side button.h57 { height: 58px; } .side button.h86 { height: 87px; } .side button.h101 { height: 102px; }
.side button.h75 { height: 76px; } .side button.h68 { height: 68px; } .side button.h70 { height: 71px; border-bottom: 0; }
.side .tri { flex: none; margin-top: 4px; }

/* status bar */
.status { display: flex; flex: none; height: 21px; border: 1px solid #7c9cc4; background: linear-gradient(#e0eaf5, #c6d4e4 40%, #b2c3d8); line-height: 19px; }
.state { display: flex; align-items: center; gap: 5px; width: 225px; margin-left: auto; padding-left: 3px; border-left: 1px solid #93a8c4; font-weight: bold; color: #355a9b; }
.coords { width: 144px; padding-left: 2px; border-left: 1px solid #93a8c4; white-space: nowrap; overflow: hidden; }
.cell { width: 26px; border-left: 1px solid #93a8c4; }
.size { width: 43px; display: flex; align-items: flex-end; justify-content: flex-end; padding: 2px; border-left: 1px solid #93a8c4; }
```
